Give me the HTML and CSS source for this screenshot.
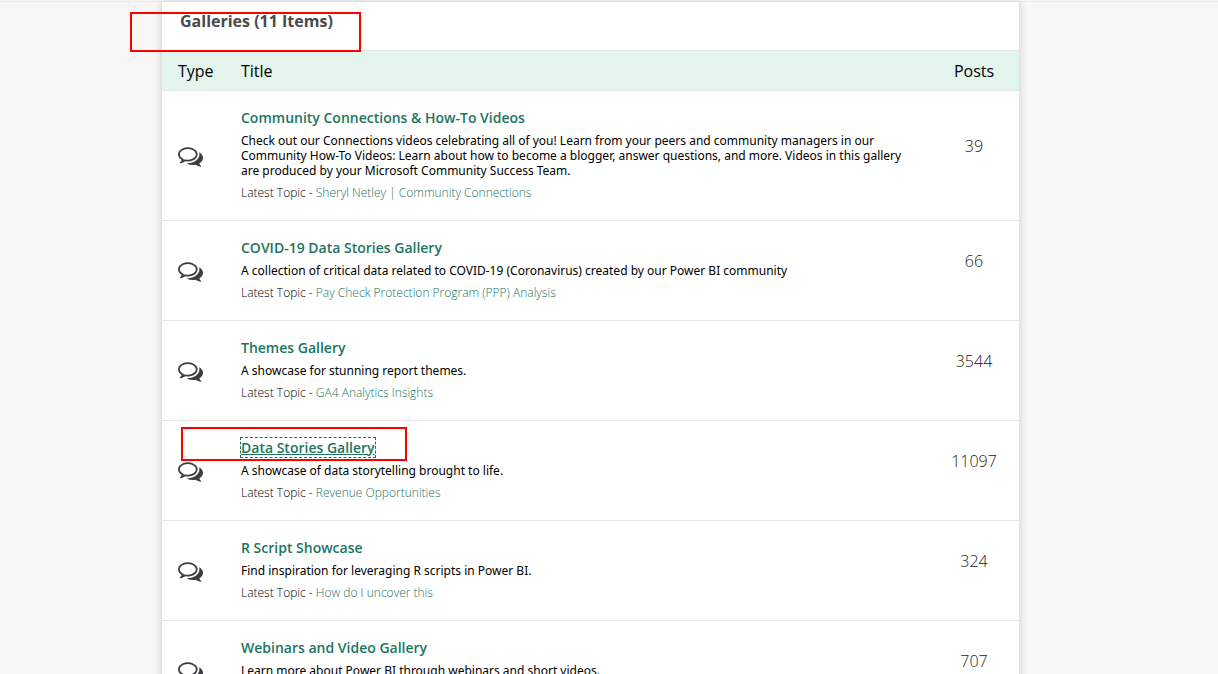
FILE: index.html
```
<!DOCTYPE html>
<html lang="en">
<head>
<meta charset="utf-8">
<title>Galleries</title>
<link rel="stylesheet" href="styles.css">
</head>
<body>
<svg class="sprite" aria-hidden="true">
  <symbol id="comments" viewBox="0 256 1792 1408">
    <path d="M704 384q-153 0-286 52t-211.500 141-78.500 191q0 82 53 158t149 132l97 56-35 84q34-20 62-39l44-31 53 10q78 14 153 14 153 0 286-52t211.500-141 78.500-191-78.500-191-211.500-141-286-52zm0-128q191 0 353.500 68.500t256.500 186.500 94 257-94 257-256.500 186.500-353.500 68.500q-86 0-176-16-124 88-278 128-36 9-86 16h-3q-11 0-20.500-8t-11.500-21q-1-3-1-6.500t.5-6.500 2-6l2.500-5 3.500-5.500 4-5 4.500-5 4-4.500q5-6 23-25t26-29.500 22.500-29 25-38.500 20.500-44q-124-72-195-177t-71-224q0-139 94-257t256.500-186.500 353.500-68.500zm822 1169q10 24 20.500 44t25 38.500 22.500 29 26 29.500 23 25q1 1 4 4.500t4.500 5 4 5 3.500 5.500l2.500 5 2 6 .5 6.500-1 6.500q-3 14-13 22t-22 7q-50-7-86-16-154-40-278-128-90 16-176 16-271 0-472-132 58 4 88 4 161 0 309-45t264-129q125-92 192-212t67-254q0-77-23-152 129 71 204 178t75 230q0 120-71 224.500t-195 176.500z"/>
  </symbol>
</svg>
<main class="page">
  <section class="panel">
    <h2 class="panel-title">Galleries (11 Items)</h2>
    <div class="mark mark-heading"></div>
    <table class="boards">
      <thead>
        <tr><th class="type" scope="col">Type</th><th class="info" scope="col">Title</th><th class="posts" scope="col">Posts</th></tr>
      </thead>
      <tbody>
        <tr>
          <td class="type"><svg class="icon" aria-hidden="true"><use href="#comments"/></svg></td>
          <td class="info">
            <h3 class="name"><a href="#">Community Connections &amp; How-To Videos</a></h3>
            <p class="about">Check out our Connections videos celebrating all of you! Learn from your peers and community managers in our Community How-To Videos: Learn about how to become a blogger, answer questions, and more. Videos in this gallery are produced by your Microsoft Community Success Team.</p>
            <p class="latest">Latest Topic - <a href="#">Sheryl Netley | Community Connections</a></p>
          </td>
          <td class="posts">39</td>
        </tr>
        <tr>
          <td class="type"><svg class="icon" aria-hidden="true"><use href="#comments"/></svg></td>
          <td class="info">
            <h3 class="name"><a href="#">COVID-19 Data Stories Gallery</a></h3>
            <p class="about">A collection of critical data related to COVID-19 (Coronavirus) created by our Power BI community</p>
            <p class="latest">Latest Topic - <a href="#">Pay Check Protection Program (PPP) Analysis</a></p>
          </td>
          <td class="posts">66</td>
        </tr>
        <tr>
          <td class="type"><svg class="icon" aria-hidden="true"><use href="#comments"/></svg></td>
          <td class="info">
            <h3 class="name"><a href="#">Themes Gallery</a></h3>
            <p class="about">A showcase for stunning report themes.</p>
            <p class="latest">Latest Topic - <a href="#">GA4 Analytics Insights</a></p>
          </td>
          <td class="posts">3544</td>
        </tr>
        <tr class="marked">
          <td class="type"><svg class="icon" aria-hidden="true"><use href="#comments"/></svg><div class="mark mark-row"></div></td>
          <td class="info">
            <h3 class="name"><a class="focused" href="#">Data Stories Gallery</a></h3>
            <p class="about">A showcase of data storytelling brought to life.</p>
            <p class="latest">Latest Topic - <a href="#">Revenue Opportunities</a></p>
          </td>
          <td class="posts">11097</td>
        </tr>
        <tr>
          <td class="type"><svg class="icon" aria-hidden="true"><use href="#comments"/></svg></td>
          <td class="info">
            <h3 class="name"><a href="#">R Script Showcase</a></h3>
            <p class="about">Find inspiration for leveraging R scripts in Power BI.</p>
            <p class="latest">Latest Topic - <a href="#">How do I uncover this</a></p>
          </td>
          <td class="posts">324</td>
        </tr>
        <tr>
          <td class="type"><svg class="icon" aria-hidden="true"><use href="#comments"/></svg></td>
          <td class="info">
            <h3 class="name"><a href="#">Webinars and Video Gallery</a></h3>
            <p class="about">Learn more about Power BI through webinars and short videos.</p>
          </td>
          <td class="posts">707</td>
        </tr>
      </tbody>
    </table>
  </section>
</main>
</body>
</html>
```
FILE: styles.css
```
* { box-sizing: border-box; }
html, body { height: 100%; margin: 0; }
html { background: #fff; }
body {
  overflow: hidden;
  background: #f7f7f7;
  color: #000;
  font-family: "Open Sans", "Noto Sans", sans-serif;
}
.sprite { display: none; }
.page {
  border-top: 1px solid #ececec;
  margin-top: 1px;
  padding-right: 37px;
}
.panel {
  position: relative;
  max-width: 859px;
  margin: 0 auto;
  background: #fff;
  border: 1px solid #e0e0e0;
  border-width: 0 1px;
  box-shadow: 0 0 8px rgba(0, 0, 0, 0.15);
}
.panel-title {
  margin: 0;
  padding: 8px 18px 18px;
  color: #4a4a4a;
  font-size: 16px;
  line-height: 22px;
  font-weight: 700;
}
.boards {
  width: 100%;
  border-collapse: separate;
  border-spacing: 0;
}
th, td { padding: 0; text-align: left; border-bottom: 1px solid #e6e6e6; }
th {
  height: 41px;
  background: #e3f5ed;
  border-top: 1px solid #e6e6e6;
  font-size: 16px;
  font-weight: 400;
}
td { height: 100px; }
.type { width: 79px; padding-left: 16px; }
.info { padding-right: 12px; }
.posts { width: 90px; text-align: center; }
td.posts { padding-bottom: 20px; font-size: 16px; line-height: 22px; font-weight: 300; color: #222; }
td.info { padding-top: 16px; padding-bottom: 20px; vertical-align: top; }
.icon { display: block; width: 25px; height: 20px; margin-top: 3px; fill: #3b3d40; }
.name { margin: 0 0 4px; font-size: 14px; line-height: 22px; font-weight: 600; }
a { color: #1c7561; text-decoration: none; }
.about, .latest { margin: 0; font-size: 12px; line-height: 15px; }
.about { font-family: "Noto Sans", "Open Sans", sans-serif; }
.latest { margin-top: 7px; font-weight: 300; }
.focused { outline: 1px dashed #1c7561; text-decoration: underline; }
.marked { position: relative; }
.mark { position: absolute; border: 2px solid #f00; pointer-events: none; }
.mark-heading { left: -32px; top: 10px; width: 231px; height: 40px; }
.mark-row { left: 19px; top: 6px; width: 226px; height: 34px; }
```
